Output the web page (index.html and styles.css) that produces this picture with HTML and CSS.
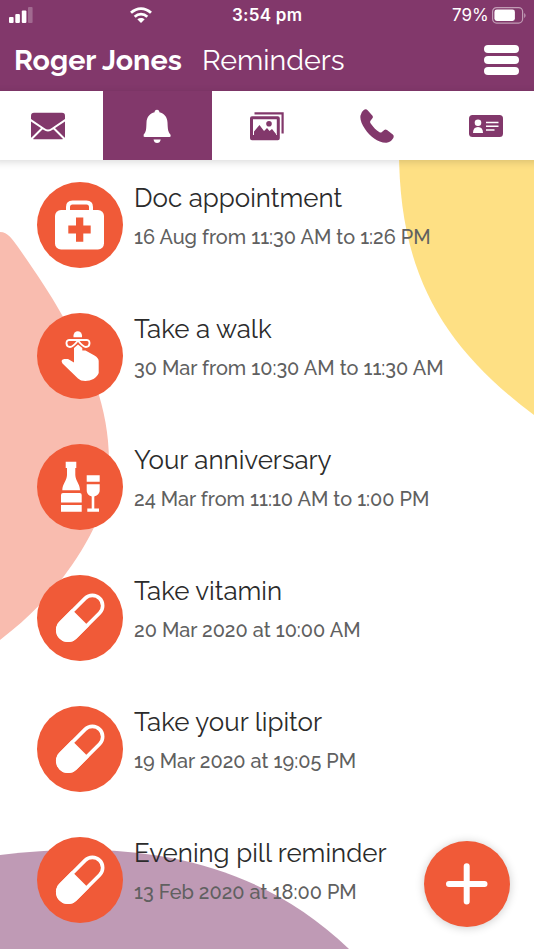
FILE: index.html
```html
<!DOCTYPE html>
<html lang="en">
<head>
    <meta charset="UTF-8">
    <meta name="viewport" content="width=device-width, initial-scale=1.0">
    <title>Reminders</title>
    <link rel="stylesheet" href="styles.css">
</head>
<body>
    <svg class="shapes" viewBox="0 0 534 950">
        <path fill="#fee084" d="M399 150C399 270 440 345 534 415V150Z"/>
        <path fill="#f9bcaf" d="M0 232C8 232 12 239 18 247C34 270 48 290 62 315C90 360 109 410 109 460C109 500 96 530 72 565C52 594 30 617 0 640Z"/>
        <path fill="#bf9ab5" d="M0 855C120 840 250 853 349 949H0Z"/>
    </svg>

    <svg class="defs">
        <symbol id="pill" viewBox="0 0 86 86">
            <g transform="rotate(-45 43.2 42.8)">
                <rect x="15.7" y="32.5" width="55" height="20.6" rx="10.3" fill="none" stroke="#fff" stroke-width="3.6"/>
                <path fill="#fff" d="M43.2 30.7V54.9H26A12.1 12.1 0 0 1 26 30.7Z"/>
            </g>
        </symbol>
    </svg>

    <header>
        <div class="status">
            <svg class="signal" viewBox="0 0 24 16" fill="#fff">
                <rect y="10" width="4.6" height="6" rx="1"/>
                <rect x="6.3" y="7" width="4.6" height="9" rx="1"/>
                <rect x="12.8" y="3.5" width="4.6" height="12.5" rx="1"/>
                <rect x="19" width="4.6" height="16" rx="1" opacity=".25"/>
            </svg>
            <svg class="wifi" viewBox="0 0 22 16" fill="none" stroke="#fff" stroke-width="2.8">
                <path d="M1 5.8C7 .2 15 .2 21 5.8"/>
                <path d="M4.7 9.7C8.4 6.3 13.6 6.3 17.3 9.7"/>
                <path fill="#fff" stroke="none" d="M7.3 12.3C9.5 10.4 12.5 10.4 14.7 12.3L11 16Z"/>
            </svg>
            <span class="time">3:54 pm</span>
            <span class="percent">79%</span>
            <svg class="battery" viewBox="0 0 34 17">
                <rect x=".6" y=".6" width="30" height="15.5" rx="4" fill="none" stroke="#fff" stroke-opacity=".5" stroke-width="1.2"/>
                <rect x="2.4" y="2.6" width="20.5" height="11.4" rx="2.4" fill="#fff"/>
                <path d="M32.2 6C34 7 34 10 32.2 11Z" fill="#fff" opacity=".5"/>
            </svg>
        </div>
        <div class="title-bar">
            <h1>Roger Jones</h1>
            <h2>Reminders</h2>
            <div class="menu"><span></span><span></span><span></span></div>
        </div>
    </header>

    <nav>
        <a class="tab">
            <svg viewBox="0 0 34 34">
                <rect y="3.7" width="34" height="26.6" rx="3" fill="#82386b"/>
                <path d="M-1 10.5L13 20Q17 23 21 20L35 10.5M-.5 31L11.5 19M34.5 31L22.5 19" fill="none" stroke="#fff" stroke-width="2"/>
            </svg>
        </a>
        <a class="tab active">
            <svg viewBox="0 0 34 34" fill="#fff">
                <path d="M17 .7C18.6 .7 19.4 1.8 19.4 3.3C24 4.3 27.3 8 27.5 13.5C27.8 21 28 22.5 30.4 25.5Q31.2 28 29.5 28H4.7Q3 28 3.7 25.5C6.2 22.5 6.2 21 6.5 13.5C6.7 8 10 4.3 14.6 3.3C14.6 1.8 15.4 .7 17 .7Z"/>
                <path d="M13.5 30.5H20.7Q20 34 17.1 34T13.5 30.5Z"/>
            </svg>
        </a>
        <a class="tab">
            <svg viewBox="0 0 34 34" fill="none" stroke="#82386b">
                <rect x="1.5" y="8.8" width="26.8" height="21" rx=".5" stroke-width="3"/>
                <path d="M4.5 4.4H32.6V24.5" stroke-width="2.2"/>
                <path d="M4 26V22.5L9.5 16L14 22L17 19L19.5 22L22 20L26 25V26Z" fill="#82386b" stroke="none"/>
                <path d="M2 28.5H28" stroke-width="5"/>
                <circle cx="19" cy="14.7" r="2.8" fill="#82386b" stroke="none"/>
            </svg>
        </a>
        <a class="tab">
            <svg viewBox="0 0 34 34" fill="#82386b">
                <path d="M3.5 1.2Q6-.5 7.6 1.3L12.5 6.8Q13.5 8.3 12.2 9.6L10.5 11.8Q9.7 13 10.7 14.6C13.2 18.3 16 21.2 19.5 23.3Q20.9 24 21.9 23L24.3 20.9Q25.6 20 27 21L32.8 25.5Q34.5 27 33 29.5Q30.5 33.5 26.5 33.7C18 34 10 27.5 5 20C1.5 14.5-.2 10 .5 6.5Q1 3 3.5 1.2Z"/>
            </svg>
        </a>
        <a class="tab">
            <svg viewBox="0 0 34 34">
                <rect y="6" width="34" height="22" rx="3.5" fill="#82386b"/>
                <circle cx="9" cy="13.7" r="3.3" fill="#fff"/>
                <path d="M4 24Q4 18 9 18T14 24Z" fill="#fff"/>
                <path d="M17 13.5H29.5M17 17.2H29.5M17 20.9H25.5" stroke="#fff" stroke-width="1.5"/>
            </svg>
        </a>
    </nav>

    <main>
        <div class="reminder">
            <svg class="icon" viewBox="0 0 86 86">
                <path d="M31 29V25Q31 20.5 35.5 20.5H49.5Q54 20.5 54 25V29" fill="none" stroke="#fff" stroke-width="4"/>
                <rect x="18" y="28" width="49" height="39.5" rx="6" fill="#fff"/>
                <path d="M39 35.5H46.3V43.6H53.7V51.6H46.3V59.7H39V51.6H31.3V43.6H39Z" fill="#f05a38"/>
            </svg>
            <div class="text">
                <h3>Doc appointment</h3>
                <p>16 Aug from 11:30 AM to 1:26 PM</p>
            </div>
        </div>
        <div class="reminder">
            <svg class="icon" viewBox="0 0 86 86">
                <path d="M36.5 24.2V22.5A4.2 4.2 0 0 1 45 22.5V24.2Z" fill="#fff"/>
                <path d="M41 27H32C28.5 27 28.5 34 33 34Q36 34 41 27.5Q46 34 49 34C53.5 34 53.5 27 50 27Z" fill="none" stroke="#fff" stroke-width="1.9"/>
                <path d="M37 35L41 31.5L45.3 35V37.5H48.5L57.5 42.5Q61.7 45 61.7 48V60C60 65 54 68 48.3 68Q43.5 68 41 65.5L25.5 50.5Q23 46.5 27.5 46H31L37 49.5Z" fill="#fff"/>
            </svg>
            <div class="text">
                <h3>Take a walk</h3>
                <p>30 Mar from 10:30 AM to 11:30 AM</p>
            </div>
        </div>
        <div class="reminder">
            <svg class="icon" viewBox="0 0 86 86" fill="#fff">
                <path d="M28.7 17.7H39.3V24H38.3V31C38.5 37 43 40 43 46.3H25.3C25.3 40 29.8 37 30 31V24H28.7Z"/>
                <path d="M24 58.5V51Q24 49 26 49H42.7Q44.7 49 44.7 51V58.5ZM24 61H44.7V67.7H24Z"/>
                <path d="M49.7 31.3H62.7V37.7H49.7ZM49.7 40.3H62.7V46C62.7 50 60 51.5 57.3 52.5V64.4H62V67.7H50.3V64.4H54.7V52.5C52 51.5 49.7 50 49.7 46Z"/>
            </svg>
            <div class="text">
                <h3>Your anniversary</h3>
                <p>24 Mar from 11:10 AM to 1:00 PM</p>
            </div>
        </div>
        <div class="reminder">
            <svg class="icon"><use href="#pill"/></svg>
            <div class="text">
                <h3>Take vitamin</h3>
                <p>20 Mar 2020 at 10:00 AM</p>
            </div>
        </div>
        <div class="reminder">
            <svg class="icon"><use href="#pill"/></svg>
            <div class="text">
                <h3>Take your lipitor</h3>
                <p>19 Mar 2020 at 19:05 PM</p>
            </div>
        </div>
        <div class="reminder">
            <svg class="icon"><use href="#pill"/></svg>
            <div class="text">
                <h3>Evening pill reminder</h3>
                <p>13 Feb 2020 at 18:00 PM</p>
            </div>
        </div>
    </main>

    <button class="add">
        <svg viewBox="0 0 86 86" stroke="#fff" stroke-width="6" stroke-linecap="round">
            <path d="M25 43H60.5M42.7 25.2V60.5"/>
        </svg>
    </button>
</body>
</html>
```
FILE: styles.css
```css
* {
    box-sizing: border-box;
    margin: 0;
    padding: 0;
}

body {
    position: relative;
    width: 534px;
    height: 950px;
    overflow: hidden;
    background-color: #fff;
    font-family: Raleway, Lato, sans-serif;
    font-variant-numeric: oldstyle-nums;
}

svg {
    display: block;
}

.defs {
    position: absolute;
    width: 0;
    height: 0;
}

.shapes {
    position: absolute;
    top: 0;
    left: 0;
    width: 534px;
    height: 950px;
    z-index: -1;
}

header {
    height: 91px;
    background-color: #82386b;
    color: #fff;
}

.status {
    display: flex;
    align-items: center;
    height: 30px;
    padding-left: 9px;
    font-family: Inter, sans-serif;
    font-variant-numeric: normal;
    font-size: 17px;
}

.signal {
    width: 24px;
    height: 16px;
}

.wifi {
    width: 22px;
    height: 16px;
    margin-left: 97px;
}

.time {
    width: 72px;
    margin-left: 80px;
    font-weight: 600;
    letter-spacing: 0.25px;
    white-space: nowrap;
}

.percent {
    width: 37px;
    margin-left: 148px;
}

.battery {
    width: 34px;
    height: 17px;
    margin-left: 3px;
}

.title-bar {
    display: flex;
    align-items: center;
    height: 59px;
    padding: 0 15px 0 14px;
}

h1 {
    width: 188px;
    font-size: 28.7px;
    font-weight: bold;
    white-space: nowrap;
}

h2 {
    font-size: 28.6px;
    font-weight: normal;
}

.menu {
    display: flex;
    flex-direction: column;
    gap: 3px;
    width: 35px;
    margin-left: auto;
}

.menu span {
    height: 8px;
    border-radius: 4px;
    background-color: #fff;
}

nav {
    display: flex;
    height: 69px;
    margin: 0 -7px;
    background-color: #fff;
    box-shadow: 0 2px 8px rgba(0, 0, 0, 0.15);
}

.tab {
    display: flex;
    flex: 1;
    align-items: center;
    justify-content: center;
}

.tab svg {
    width: 34px;
    height: 34px;
}

.active {
    background-color: #82386b;
}

main {
    display: flex;
    flex-direction: column;
    gap: 45px;
    padding: 22px 0 0 37px;
}

.reminder {
    display: flex;
    gap: 11px;
    height: 86px;
}

.icon {
    width: 86px;
    height: 86px;
    border-radius: 50%;
    background-color: #f05a38;
}

.text {
    white-space: nowrap;
}

h3 {
    height: 39px;
    font-size: 25.9px;
    font-weight: normal;
    line-height: 32px;
    color: #2b2b2b;
}

p {
    font-size: 19.9px;
    font-weight: 500;
    line-height: 32px;
    color: #606060;
}

.add {
    position: absolute;
    left: 424px;
    top: 841px;
    width: 86px;
    height: 86px;
    border: none;
    border-radius: 50%;
    background-color: #f05a38;
    box-shadow: 0 1px 10px rgba(0, 0, 0, 0.2);
}
```
